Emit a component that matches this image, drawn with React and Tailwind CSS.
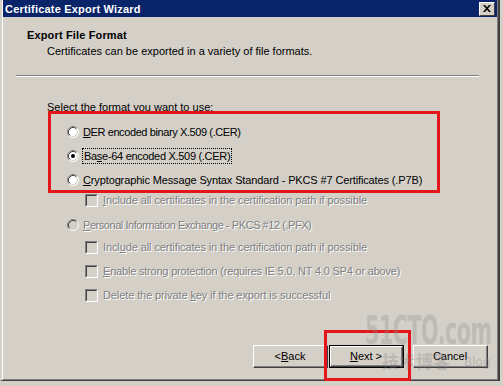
import React from "react";

function Radio({ checked, disabled }) {
  return (
    <svg width="12" height="12" viewBox="0 0 12 12" className="shrink-0">
      <circle cx="6" cy="6" r="5" fill={disabled ? "#d4d0c8" : "#ffffff"} />
      <path d="M2.11 9.89 A5.5 5.5 0 0 1 9.89 2.11" fill="none" stroke="#808080" strokeWidth="1" />
      <path d="M9.89 2.11 A5.5 5.5 0 0 1 2.11 9.89" fill="none" stroke="#ffffff" strokeWidth="1" />
      <path d="M2.82 9.18 A4.5 4.5 0 0 1 9.18 2.82" fill="none" stroke="#404040" strokeWidth="1" />
      <path d="M9.18 2.82 A4.5 4.5 0 0 1 2.82 9.18" fill="none" stroke="#d4d0c8" strokeWidth="1" />
      {checked && <circle cx="6" cy="6" r="2" fill="#000000" />}
    </svg>
  );
}

function Check() {
  return (
    <div className="w-[13px] h-[13px] shrink-0 border-t border-l border-t-[#808080] border-l-[#808080] border-b border-r border-b-white border-r-white">
      <div className="w-full h-full border-t border-l border-t-[#404040] border-l-[#404040] border-b border-r border-b-[#d4d0c8] border-r-[#d4d0c8] bg-[#d4d0c8]" />
    </div>
  );
}

const dis = "text-[#808080] [text-shadow:1px_1px_0_#ffffff]";

function Btn({ children, def }) {
  return (
    <div className={"w-[75px] h-[23px] " + (def ? "border border-black" : "")}>
      <div className="w-full h-full border-t border-l border-t-white border-l-white border-b border-r border-b-[#404040] border-r-[#404040]">
        <div className="w-full h-full border-b border-r border-b-[#808080] border-r-[#808080] flex items-center justify-center text-black">
          {children}
        </div>
      </div>
    </div>
  );
}

export default function App() {
  return (
    <div className="relative w-[503px] h-[386px] overflow-hidden bg-[#d4d0c8] font-['Liberation_Sans',Arial,sans-serif] text-[11px] leading-[14px] text-black">
      <div className="w-[500px] h-[381px] flex flex-col border-l-2 border-l-[#d4d0c8] border-r-2 border-r-[#404040] border-b border-b-[#404040]">
        <div className="h-[381px] flex flex-col border-l border-l-white border-r border-r-[#808080] border-b border-b-[#808080]">
          <div className="h-[17px] bg-[#0a246a] flex items-center justify-between pl-[2px] pr-[2px] shrink-0">
            <span className="text-white font-bold text-[11px] tracking-[0.2px]">Certificate Export Wizard</span>
            <div className="w-[16px] h-[14px] bg-[#d4d0c8] border-t border-l border-t-white border-l-white border-b border-r border-b-[#404040] border-r-[#404040] flex items-center justify-center">
              <svg width="8" height="7" viewBox="0 0 8 7">
                <path d="M0 0 L2 0 L4 2.3 L6 0 L8 0 L5 3.5 L8 7 L6 7 L4 4.7 L2 7 L0 7 L3 3.5 Z" fill="#000" />
              </svg>
            </div>
          </div>

          <div className="flex-1 flex flex-col">
            <div className="mt-[11px] pl-[24px] font-bold tracking-[0.15px]">Export File Format</div>
            <div className="mt-[2px] pl-[44px]">Certificates can be exported in a variety of file formats.</div>
            <div className="mt-[17px] ml-[13px] mr-[18px] border-t border-t-[#808080] border-b border-b-white" />

            <div className="mt-[23px] pl-[44px]">Select the format you want to use:</div>

            <div className="mt-[10px] pl-[64px] flex items-center h-[16px] gap-[4px]">
              <Radio />
              <span className="tracking-[-0.4px]"><u>D</u>ER encoded binary X.509 (.CER)</span>
            </div>
            <div className="mt-[8px] pl-[64px] flex items-center h-[16px] gap-[3px]">
              <Radio checked />
              <span className="border border-dotted border-black px-[1px] tracking-[-0.3px]">Ba<u>s</u>e-64 encoded X.509 (.CER)</span>
            </div>
            <div className="mt-[8px] pl-[64px] flex items-center h-[16px] gap-[4px]">
              <Radio />
              <span className="tracking-[-0.13px]"><u>C</u>ryptographic Message Syntax Standard - PKCS #7 Certificates (.P7B)</span>
            </div>
            <div className="mt-[4px] pl-[82px] flex items-center h-[16px] gap-[5px]">
              <Check />
              <span className={dis + " tracking-[-0.1px]"}><u>I</u>nclude all certificates in the certification path if possible</span>
            </div>
            <div className="mt-[9px] pl-[64px] flex items-center h-[16px] gap-[4px]">
              <Radio disabled />
              <span className={dis + " tracking-[-0.45px]"}><u>P</u>ersonal Information Exchange - PKCS #12 (.PFX)</span>
            </div>
            <div className="mt-[6px] pl-[82px] flex items-center h-[16px] gap-[5px]">
              <Check />
              <span className={dis + " tracking-[-0.1px]"}>Incl<u>u</u>de all certificates in the certification path if possible</span>
            </div>
            <div className="mt-[8px] pl-[82px] flex items-center h-[16px] gap-[5px]">
              <Check />
              <span className={dis + " tracking-[-0.2px]"}><u>E</u>nable strong protection (requires IE 5.0, NT 4.0 SP4 or above)</span>
            </div>
            <div className="mt-[8px] pl-[82px] flex items-center h-[16px] gap-[5px]">
              <Check />
              <span className={dis + " tracking-[-0.1px]"}>Delete the private <u>k</u>ey if the export is successful</span>
            </div>

            <div className="mt-auto mb-[11px] flex justify-end pr-[9px]">
              <Btn>&lt; <u>B</u>ack</Btn>
              <div className="ml-[1px]">
                <Btn def><u>N</u>ext &gt;</Btn>
              </div>
              <div className="ml-[9px]">
                <Btn>Cancel</Btn>
              </div>
            </div>
          </div>
        </div>
      </div>

      <div className="absolute left-[48px] top-[111px] w-[392px] h-[82px] border-[3px] border-[#e3171b]" />
      <div className="absolute left-[324px] top-[330px] w-[87px] h-[51px] border-[3px] border-[#e3171b]" />

      <div className="absolute left-[365px] top-[312px] text-[23px] leading-[22px] font-bold font-['DejaVu_Sans_Condensed','DejaVu_Sans',sans-serif] tracking-[-0.5px] scale-y-[1.7] origin-top text-[rgba(140,140,140,0.3)] pointer-events-none">51CTO.com</div>
      <div className="absolute left-[382px] top-[350px] text-[17px] leading-[22px] font-bold font-['Noto_Sans_CJK_SC',sans-serif] text-[rgba(120,120,120,0.3)] pointer-events-none">技术博客</div>
      <div className="absolute left-[464px] top-[354px] text-[12px] leading-[16px] font-['DejaVu_Sans',sans-serif] text-[rgba(140,140,140,0.4)] pointer-events-none">Blog</div>
    </div>
  );
}
